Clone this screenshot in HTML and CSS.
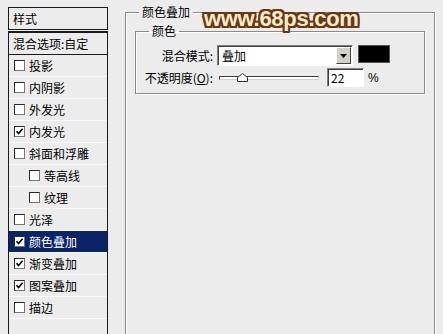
FILE: index.html
```html
<!DOCTYPE html>
<html>
<head>
<meta charset="utf-8">
<link rel="stylesheet" href="styles.css">
</head>
<body>
<div class="page">
  <div class="styles-panel">
    <div class="panel-head">样式</div>
    <div class="panel-list">
      <div class="row row-blend">混合选项:自定</div>
      <div class="row"><span class="cb"></span>投影</div>
      <div class="row"><span class="cb"></span>内阴影</div>
      <div class="row"><span class="cb"></span>外发光</div>
      <div class="row"><span class="cb checked"><svg viewBox="0 0 9 9"><path d="M1.5 4.2 L3.6 6.6 L7.6 1.8"/></svg></span>内发光</div>
      <div class="row"><span class="cb"></span>斜面和浮雕</div>
      <div class="row sub"><span class="cb"></span>等高线</div>
      <div class="row sub"><span class="cb"></span>纹理</div>
      <div class="row"><span class="cb"></span>光泽</div>
      <div class="row selected"><span class="cb checked"><svg viewBox="0 0 9 9"><path d="M1.5 4.2 L3.6 6.6 L7.6 1.8"/></svg></span>颜色叠加</div>
      <div class="row"><span class="cb checked"><svg viewBox="0 0 9 9"><path d="M1.5 4.2 L3.6 6.6 L7.6 1.8"/></svg></span>渐变叠加</div>
      <div class="row"><span class="cb checked"><svg viewBox="0 0 9 9"><path d="M1.5 4.2 L3.6 6.6 L7.6 1.8"/></svg></span>图案叠加</div>
      <div class="row"><span class="cb"></span>描边</div>
    </div>
  </div>

  <fieldset class="group outer">
    <legend class="legend outer-legend">颜色叠加</legend>
    <fieldset class="group inner">
      <legend class="legend inner-legend">颜色</legend>
      <div class="form-row row1">
        <label class="lbl">混合模式:</label>
        <div class="select">
          <span class="select-text">叠加</span>
          <span class="drop-btn"><svg viewBox="0 0 7 4"><path d="M0 0 H7 L3.5 4 Z"/></svg></span>
        </div>
        <span class="swatch"></span>
      </div>
      <div class="form-row row2">
        <label class="lbl">不透明度(<u>O</u>):</label>
        <div class="slider">
          <span class="track"></span>
          <svg class="thumb" viewBox="0 0 11 9"><path d="M0.5 8.5 V4.5 L5.5 0.5 L10.5 4.5 V8.5 Z"/></svg>
        </div>
        <span class="num">22</span>
        <span class="pct">%</span>
      </div>
    </fieldset>
  </fieldset>

  <div class="watermark">www.68ps.com</div>
</div>
</body>
</html>
```

FILE: styles.css
```css
html, body {
  margin: 0;
  padding: 0;
  background: #ececec;
  overflow: hidden;
}
body {
  width: 443px;
  height: 334px;
  font-family: "Noto Sans CJK SC", "Liberation Sans", sans-serif;
  font-size: 12px;
  color: #000;
}
.page {
  position: relative;
  display: flex;
  align-items: flex-start;
  height: 334px;
  overflow: hidden;
}

/* left list */
.styles-panel {
  margin-left: 8px;
  margin-top: 7px;
  width: 100px;
  display: flex;
  flex-direction: column;
  gap: 1px;
}
.panel-head {
  box-sizing: border-box;
  height: 23px;
  border: 1px solid #1a1a1a;
  padding-left: 4px;
  line-height: 21px;
}
.panel-list {
  box-sizing: border-box;
  height: 303px;
  border: 1px solid #1a1a1a;
  border-bottom: none;
  border-top-width: 2px;
}
.row {
  display: flex;
  align-items: center;
  height: 21px;
  border-bottom: 1px solid #fafafa;
  padding-left: 5px;
  line-height: 21px;
  white-space: nowrap;
}
.row-blend {
  padding-left: 4px;
  border-bottom: 1px solid #1a1a1a;
}
.row.sub {
  padding-left: 20px;
}
.row.selected {
  background: #0a246a;
  color: #fff;
}
.cb {
  box-sizing: border-box;
  width: 11px;
  height: 11px;
  border: 1px solid #2a2a2a;
  border-right-color: #777;
  border-bottom-color: #777;
  background: #fff;
  margin-right: 4px;
  margin-top: -1px;
  display: flex;
}
.cb svg {
  width: 9px;
  height: 9px;
}
.cb svg path {
  fill: none;
  stroke: #000;
  stroke-width: 1.6;
}

/* group boxes */
.group {
  margin: 0;
  min-width: 0;
  border: 1px solid #8a8a8a;
  box-shadow: 1px 1px 0 #fff, inset 1px 1px 0 #fff;
}
.outer {
  margin-left: 17px;
  margin-top: 5px;
  width: 310px;
  height: 329px;
  box-sizing: border-box;
  padding: 5px 9px 0 9px;
  border-bottom: none;
}
.legend {
  padding: 0 3px;
  line-height: 14px;
}
.outer-legend {
  margin-left: 4px;
}
.inner {
  box-sizing: border-box;
  width: 290px;
  padding: 7px 0 6px 0;
}
.inner-legend {
  margin-left: 13px;
}
.form-row {
  display: flex;
  align-items: center;
}
.row1 {
  height: 21px;
}
.row2 {
  height: 19px;
  margin-top: 2px;
}
.lbl {
  width: 77px;
  text-align: right;
  white-space: nowrap;
}
.lbl u {
  text-decoration: underline;
}
.select {
  box-sizing: border-box;
  margin-left: 4px;
  width: 136px;
  height: 21px;
  background: #fff;
  border-top: 1px solid #808080;
  border-left: 1px solid #808080;
  border-right: 1px solid #fff;
  border-bottom: 1px solid #fff;
  box-shadow: inset 1px 1px 0 #404040;
  display: flex;
  align-items: center;
  justify-content: space-between;
  padding: 1px 1px 1px 4px;
}
.select-text {
  line-height: 17px;
}
.drop-btn {
  box-sizing: border-box;
  width: 15px;
  height: 17px;
  background: #d4d0c8;
  border: 1px solid;
  border-color: #fff #404040 #404040 #fff;
  display: flex;
  align-items: center;
  justify-content: center;
}
.drop-btn svg {
  width: 7px;
  height: 4px;
}
.drop-btn path {
  fill: #000;
}
.swatch {
  margin-left: 5px;
  width: 32px;
  height: 18px;
  margin-top: -3px;
  background: #000;
  box-sizing: border-box;
  border: 1px solid #555;
}
.slider {
  position: relative;
  margin-left: 6px;
  width: 100px;
  height: 19px;
  display: flex;
  align-items: center;
}
.track {
  box-sizing: border-box;
  width: 100px;
  height: 4px;
  margin-top: 1px;
  background: #fff;
  border-top: 1px solid #404040;
  border-left: 1px solid #404040;
  border-bottom: 1px solid #d4d0c8;
  border-right: 1px solid #d4d0c8;
}
.thumb {
  position: absolute;
  left: 18px;
  top: 5px;
  width: 11px;
  height: 9px;
}
.thumb path {
  fill: #fff;
  stroke: #303030;
  stroke-width: 1;
}
.num {
  box-sizing: border-box;
  margin-left: 8px;
  width: 37px;
  height: 19px;
  background: #fff;
  border-top: 1px solid #808080;
  border-left: 1px solid #808080;
  border-right: 1px solid #fff;
  border-bottom: 1px solid #fff;
  box-shadow: inset 1px 1px 0 #404040;
  padding-left: 3px;
  line-height: 17px;
}
.pct {
  margin-left: 4px;
  font-family: "Liberation Sans", sans-serif;
}

/* watermark overlay */
.watermark {
  position: absolute;
  left: 204px;
  top: 6px;
  font-family: "Liberation Sans", Arial, sans-serif;
  font-weight: bold;
  font-size: 22px;
  line-height: 26px;
  letter-spacing: -0.3px;
  color: #fbeecb;
  text-shadow:
    2px 0 0 #6b3613, -2px 0 0 #6b3613, 0 2px 0 #6b3613, 0 -2px 0 #6b3613,
    2px 2px 0 #6b3613, -2px -2px 0 #6b3613, 2px -2px 0 #6b3613, -2px 2px 0 #6b3613,
    1px 0 0 #6b3613, -1px 0 0 #6b3613, 0 1px 0 #6b3613, 0 -1px 0 #6b3613;
}
```
